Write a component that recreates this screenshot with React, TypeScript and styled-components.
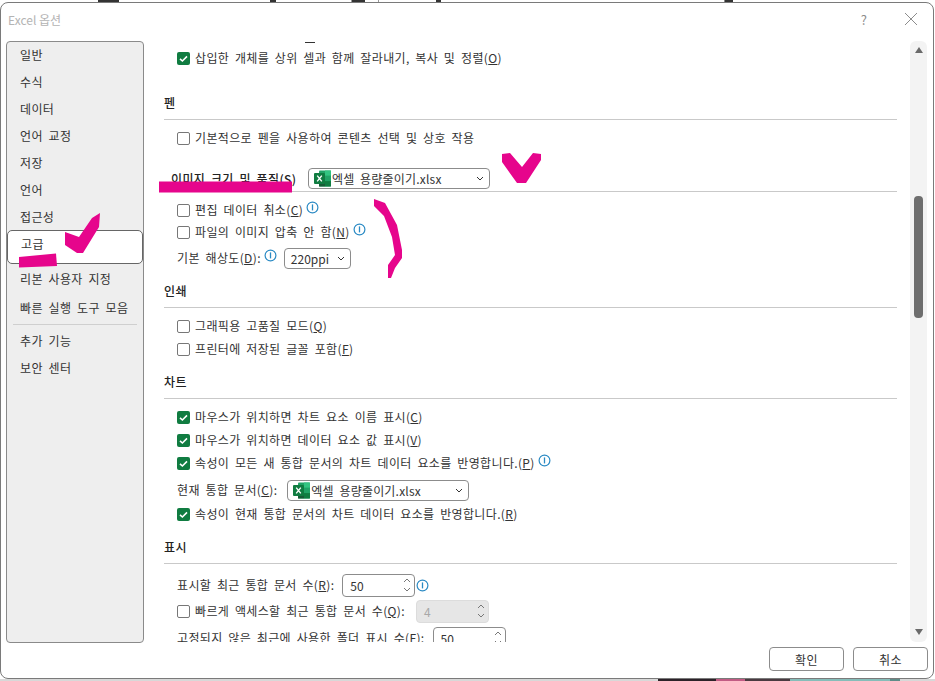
import React from 'react';
import styled, { createGlobalStyle } from 'styled-components';

const GlobalStyle = createGlobalStyle`
  html, body {
    margin: 0;
    padding: 0;
    background: #fff;
  }
  body {
    font-family: "Noto Sans CJK KR", "Noto Sans", sans-serif;
    color: #222;
  }
`;

const Info = ({ level }: { level?: boolean }) => (
  <InfoIcon $level={level} width="13" height="13" viewBox="0 0 13 13">
    <circle cx="6.5" cy="6.5" r="5.4" fill="#fff" stroke="#2a8ac4" strokeWidth="1.2" />
    <path d="M6.5 3.4v6" stroke="#2a8ac4" strokeWidth="1.3" />
  </InfoIcon>
);

const ExcelLogo = () => (
  <svg width="17" height="17" viewBox="0 0 17 17">
    <rect x="5" y="0.5" width="12" height="16" rx="1" fill="#21a366" />
    <rect x="11" y="0.5" width="6" height="5.3" fill="#33c481" />
    <rect x="11" y="5.8" width="6" height="5.3" fill="#21a366" />
    <rect x="11" y="11.1" width="6" height="5.4" fill="#107c41" />
    <rect x="5" y="11.1" width="6" height="5.4" fill="#185c37" />
    <rect x="0" y="3" width="11" height="11" rx="1" fill="#107c41" />
    <path d="M3.2 5.6l4.6 5.8M7.8 5.6l-4.6 5.8" stroke="#fff" strokeWidth="1.4" />
  </svg>
);

const Chevron = ({ up }: { up?: boolean }) => (
  <svg width="8" height="5" viewBox="0 0 8 5">
    <path d={up ? 'M1 4l3-3 3 3' : 'M1 1l3 3 3-3'} fill="none" stroke="currentColor" strokeWidth="1" />
  </svg>
);

const Check = ({ on }: { on?: boolean }) => (
  <CheckBox $on={on}>
    {on && (
      <CheckMark width="13" height="13" viewBox="0 0 13 13">
        <path d="M3 6.800l2.400 2.200L10 4.400" fill="none" stroke="#fff" strokeWidth="1.6" />
      </CheckMark>
    )}
  </CheckBox>
);

const Key = ({ k }: { k: string }) => (
  <>
    (<u>{k}</u>)
  </>
);

const menu = ['일반', '수식', '데이터', '언어 교정', '저장', '언어', '접근성'];

const Combo = ({ width, name }: { width: number; name: string }) => (
  <Select $w={width}>
    <ExcelLogo />
    <SelectText>{name}</SelectText>
    <Chevron />
  </Select>
);

export default function App() {
  return (
    <Page>
      <GlobalStyle />
      <TopStrip />
      <Dialog>
        <TitleBar>
          <Title>Excel 옵션</Title>
          <TitleButtons>
            <Help>?</Help>
            <svg width="14" height="14" viewBox="0 0 14 14">
              <path d="M1 1l12 12M13 1L1 13" stroke="#8c8c8c" strokeWidth="1" />
            </svg>
          </TitleButtons>
        </TitleBar>

        <Body>
          <Sidebar>
            {menu.map((m) => (
              <MenuItem key={m}>{m}</MenuItem>
            ))}
            <ActiveItem>고급</ActiveItem>
            <MenuItem>리본 사용자 지정</MenuItem>
            <MenuItem $h={31}>빠른 실행 도구 모음</MenuItem>
            <MenuDivider />
            <MenuItem>추가 기능</MenuItem>
            <MenuItem>보안 센터</MenuItem>
          </Sidebar>

          <Pane>
            <ClippedRow><Stub /></ClippedRow>
            <Group>
              <Row $h={24}><Check on /><Label>삽입한 개체를 상위 셀과 함께 잘라내기, 복사 및 정렬<Key k="O" /></Label></Row>
            </Group>

            <Heading $h={50}>펜</Heading>
            <Group>
              <Row $h={36}><Check /><Label>기본적으로 펜을 사용하여 콘텐츠 선택 및 상호 작용</Label></Row>
            </Group>

            <ImageHeading>
              <ImageTitle>이미지 크기 및 품질<Key k="S" /></ImageTitle>
              <Combo width={182} name="엑셀 용량줄이기.xlsx" />
            </ImageHeading>
            <Group $top={7}>
              <Row><Check /><Label>편집 데이터 취소<Key k="C" /></Label><Info /></Row>
              <Row><Check /><Label>파일의 이미지 압축 안 함<Key k="N" /></Label><Info /></Row>
              <Row $h={30}>
                <PlainLabel>기본 해상도<Key k="D" />:</PlainLabel><Info />
                <SmallSelect>220ppi<Chevron /></SmallSelect>
              </Row>
            </Group>

            <Heading $h={35}>인쇄</Heading>
            <Group $top={7}>
              <Row><Check /><Label>그래픽용 고품질 모드<Key k="Q" /></Label></Row>
              <Row $h={24}><Check /><Label>프린터에 저장된 글꼴 포함<Key k="F" /></Label></Row>
            </Group>

            <Heading $h={38}>차트</Heading>
            <Group $top={7}>
              <Row><Check on /><Label>마우스가 위치하면 차트 요소 이름 표시<Key k="C" /></Label></Row>
              <Row $h={24}><Check on /><Label>마우스가 위치하면 데이터 요소 값 표시<Key k="V" /></Label></Row>
              <Row><Check on /><Label>속성이 모든 새 통합 문서의 차트 데이터 요소를 반영합니다.<Key k="P" /></Label><Info /></Row>
              <Row $h={32}>
                <PlainLabel>현재 통합 문서<Key k="C" />:</PlainLabel>
                <ChartCombo><Combo width={182} name="엑셀 용량줄이기.xlsx" /></ChartCombo>
              </Row>
              <Row $h={16}><Check on /><Label>속성이 현재 통합 문서의 차트 데이터 요소를 반영합니다.<Key k="R" /></Label></Row>
            </Group>

            <Heading $h={42}>표시</Heading>
            <Group $top={7}>
              <Row $h={28}>
                <PlainLabel>표시할 최근 통합 문서 수<Key k="R" />:</PlainLabel>
                <Spin $gap={8}>50<Arrows><Chevron up /><Chevron /></Arrows></Spin>
                <Info level />
              </Row>
              <Row $h={24}>
                <Check /><Label>빠르게 액세스할 최근 통합 문서 수<Key k="Q" />:</Label>
                <Spin $gap={11} $disabled>4<Arrows><Chevron up /><Chevron /></Arrows></Spin>
              </Row>
              <Row $h={30}>
                <PlainLabel>고정되지 않은 최근에 사용한 폴더 표시 수<Key k="F" />:</PlainLabel>
                <Spin $gap={8}>50<Arrows><Chevron up /><Chevron /></Arrows></Spin>
              </Row>
            </Group>
          </Pane>

          <Scrollbar>
            <ArrowUp />
            <Thumb />
            <ArrowDown />
          </Scrollbar>
        </Body>

        <Footer>
          <Button>확인</Button>
          <Button>취소</Button>
        </Footer>
      </Dialog>
      <BottomStrip />

      <Marks viewBox="0 0 935 681">
        <path d="M159 181.500L292 181.500L292 192.500L159 192.500Z" />
        <path d="M19 257L56 253.500L57 266L19 267.500Z" />
        <path d="M65 232L79 237L92 218L100 213L99 227L83 253L77 253L65 245Z" />
        <path d="M502 154L510 153L522 167L533 153L541 154L541 160L526 183L517 183L502 162Z" />
        <path d="M374 199L385 203L397 225L402 250L402 258L395 268L391 278L388 278L388 265L395 255L392 237L384 216L374 206Z" />
      </Marks>
    </Page>
  );
}

const Page = styled.div`
  position: relative;
  display: flex;
  flex-direction: column;
  width: 935px;
  height: 681px;
  overflow: hidden;
  background: #fff;
`;

const TopStrip = styled.div`
  height: 2px;
  flex: none;
  background: linear-gradient(
    90deg,
    #fff 0 98px, #333 98px 119px, #fff 119px 270px, #333 270px 276px, #fff 276px 351px, #999 351px 352px,
    #333 352px 365px, #fff 365px 378px, #999 378px 379px, #fff 379px 436px, #333 436px 441px,
    #fff 441px 724px, #888 724px 725px, #333 725px 733px, #fff 733px
  );
`;

const BottomStrip = styled.div`
  height: 2px;
  flex: none;
  background: linear-gradient(
    90deg,
    #d8d8d8 0 658px, #2c2228 658px 716px, #c25c84 716px 745px, #4a3a40 745px 790px,
    #86bdb9 790px 890px, #5f8c88 890px 900px, #d8d8d8 900px
  );
`;

const Dialog = styled.div`
  flex: 1;
  display: flex;
  flex-direction: column;
  min-height: 0;
  margin-right: 1px;
  background: #fff;
  border: 1px solid #7a7a7a;
  border-radius: 8px;
`;

const TitleBar = styled.div`
  flex: none;
  height: 38px;
  display: flex;
  align-items: center;
  justify-content: space-between;
  padding: 0 15px 6px 7px;
  box-sizing: border-box;
`;

const Title = styled.div`
  font-size: 12px;
  color: #b4b4b4;
`;

const TitleButtons = styled.div`
  display: flex;
  align-items: center;
  gap: 37px;
`;

const Help = styled.span`
  font-size: 13px;
  color: #8c8c8c;
`;

const Body = styled.div`
  flex: none;
  height: 602px;
  display: flex;
  padding-left: 5px;
`;

const Sidebar = styled.nav`
  flex: none;
  width: 138px;
  box-sizing: border-box;
  background: #eeeeee;
  border: 1px solid #8a8a8a;
  border-radius: 4px;
`;

const MenuItem = styled.div<{ $h?: number }>`
  height: ${(p) => p.$h ?? 27}px;
  box-sizing: border-box;
  display: flex;
  align-items: center;
  padding: 0 0 2px 13px;
  font-size: 12px;
  letter-spacing: 0.35px;
  word-spacing: 2.700px;
  color: #333;
`;

const ActiveItem = styled.div`
  height: 34px;
  margin: -1px 0 2px;
  box-sizing: border-box;
  padding: 4px 0 0 13px;
  font-size: 12px;
  letter-spacing: 0.35px;
  color: #333;
  background: #fff;
  border: 1px solid #666;
  border-radius: 5px;
`;

const MenuDivider = styled.div`
  height: 1px;
  margin: 0 6px 3px;
  background: #cfcfcf;
`;

const Pane = styled.div`
  flex: none;
  width: 766px;
  height: 601px;
  overflow: hidden;
  box-sizing: border-box;
  padding: 0 13px 0 20px;
`;

const ClippedRow = styled.div`
  height: 5px;
  padding: 1px 0 0 141px;
  box-sizing: border-box;
`;

const Stub = styled.div`
  width: 10px;
  height: 1px;
  background: #333;
`;

const Group = styled.div<{ $top?: number }>`
  padding: ${(p) => p.$top ?? 0}px 0 0 13px;
`;

const Row = styled.div<{ $h?: number }>`
  height: ${(p) => p.$h ?? 22}px;
  display: flex;
  align-items: center;
`;

const CheckBox = styled.span<{ $on?: boolean }>`
  flex: none;
  display: block;
  width: 13px;
  height: 13px;
  box-sizing: border-box;
  border-radius: 2px;
  overflow: hidden;
  background: ${(p) => (p.$on ? '#107c41' : '#fff')};
  border: ${(p) => (p.$on ? 'none' : '1px solid #777')};
`;

const CheckMark = styled.svg`
  display: block;
`;

const PlainLabel = styled.span`
  font-size: 12px;
  letter-spacing: 0.35px;
  word-spacing: 2.700px;
  line-height: 18px;
  white-space: nowrap;
  color: #333;
`;

const Label = styled(PlainLabel)`
  margin-left: 5px;
`;

const InfoIcon = styled.svg<{ $level?: boolean }>`
  flex: none;
  margin: ${(p) => (p.$level ? '0 0 0 1px' : '-5px 0 0 3px')};
`;

const Heading = styled.div<{ $h: number }>`
  height: ${(p) => p.$h}px;
  box-sizing: border-box;
  display: flex;
  align-items: flex-end;
  padding-bottom: 7px;
  font-size: 12px;
  font-weight: 500;
  line-height: 18px;
  letter-spacing: 0.35px;
  word-spacing: 2.700px;
  color: #222;
  border-bottom: 1px solid #c9c9c9;
`;

const ImageHeading = styled(Heading).attrs({ $h: 36 })`
  padding: 0 0 2px 7px;
`;

const ImageTitle = styled.span`
  width: 137px;
  margin-bottom: 1px;
  white-space: nowrap;
`;

const Select = styled.div<{ $w: number }>`
  flex: none;
  width: ${(p) => p.$w}px;
  height: 21px;
  box-sizing: border-box;
  display: flex;
  align-items: center;
  gap: 1px;
  padding: 0 5px;
  font-size: 12px;
  font-weight: 400;
  letter-spacing: 0.2px;
  word-spacing: 2.700px;
  color: #333;
  background: #fff;
  border: 1px solid #8c8c8c;
  border-radius: 4px;
`;

const SelectText = styled.span`
  flex: 1;
  white-space: nowrap;
`;

const ChartCombo = styled.div`
  margin-left: 10px;
`;

const SmallSelect = styled.div`
  flex: none;
  width: 67px;
  height: 21px;
  margin-left: 7px;
  box-sizing: border-box;
  display: flex;
  align-items: center;
  justify-content: space-between;
  padding: 0 5px 0 6px;
  font-size: 12px;
  color: #333;
  border: 1px solid #8c8c8c;
  border-radius: 4px;
`;

const Spin = styled.div<{ $gap: number; $disabled?: boolean }>`
  flex: none;
  width: 73px;
  height: 23px;
  margin-left: ${(p) => p.$gap}px;
  box-sizing: border-box;
  display: flex;
  align-items: center;
  justify-content: space-between;
  padding: 0 3px 0 7px;
  font-size: 12px;
  color: ${(p) => (p.$disabled ? '#a8a8a8' : '#333')};
  background: ${(p) => (p.$disabled ? '#e6e6e6' : '#fff')};
  border: 1px solid ${(p) => (p.$disabled ? '#dcdcdc' : '#8c8c8c')};
  border-radius: 4px;
`;

const Arrows = styled.span`
  display: flex;
  flex-direction: column;
  gap: 4px;
  color: #777;
`;

const Scrollbar = styled.div`
  flex: none;
  width: 17px;
  height: 601px;
  display: flex;
  flex-direction: column;
  align-items: center;
  background: #f3f3f3;
  border-radius: 6px;
`;

const ArrowUp = styled.div`
  margin-top: 6px;
  width: 0;
  height: 0;
  border-left: 4.500px solid transparent;
  border-right: 4.500px solid transparent;
  border-bottom: 6px solid #6a6a6a;
`;

const ArrowDown = styled.div`
  margin-top: 311px;
  width: 0;
  height: 0;
  border-left: 4.500px solid transparent;
  border-right: 4.500px solid transparent;
  border-top: 6px solid #6a6a6a;
`;

const Thumb = styled.div`
  margin-top: 143px;
  width: 9px;
  height: 122px;
  background: #6e6e6e;
  border-radius: 4px;
`;

const Footer = styled.div`
  flex: 1;
  display: flex;
  justify-content: flex-end;
  gap: 9px;
  padding: 4px 5px 0 0;
`;

const Button = styled.button`
  width: 75px;
  height: 24px;
  padding: 0;
  font-family: inherit;
  font-size: 12px;
  letter-spacing: 0.5px;
  color: #333;
  background: #fff;
  border: 1px solid #8c8c8c;
  border-radius: 4px;
`;

const Marks = styled.svg`
  position: absolute;
  left: 0;
  top: 0;
  width: 935px;
  height: 681px;
  pointer-events: none;
  fill: #e6058c;
`;
